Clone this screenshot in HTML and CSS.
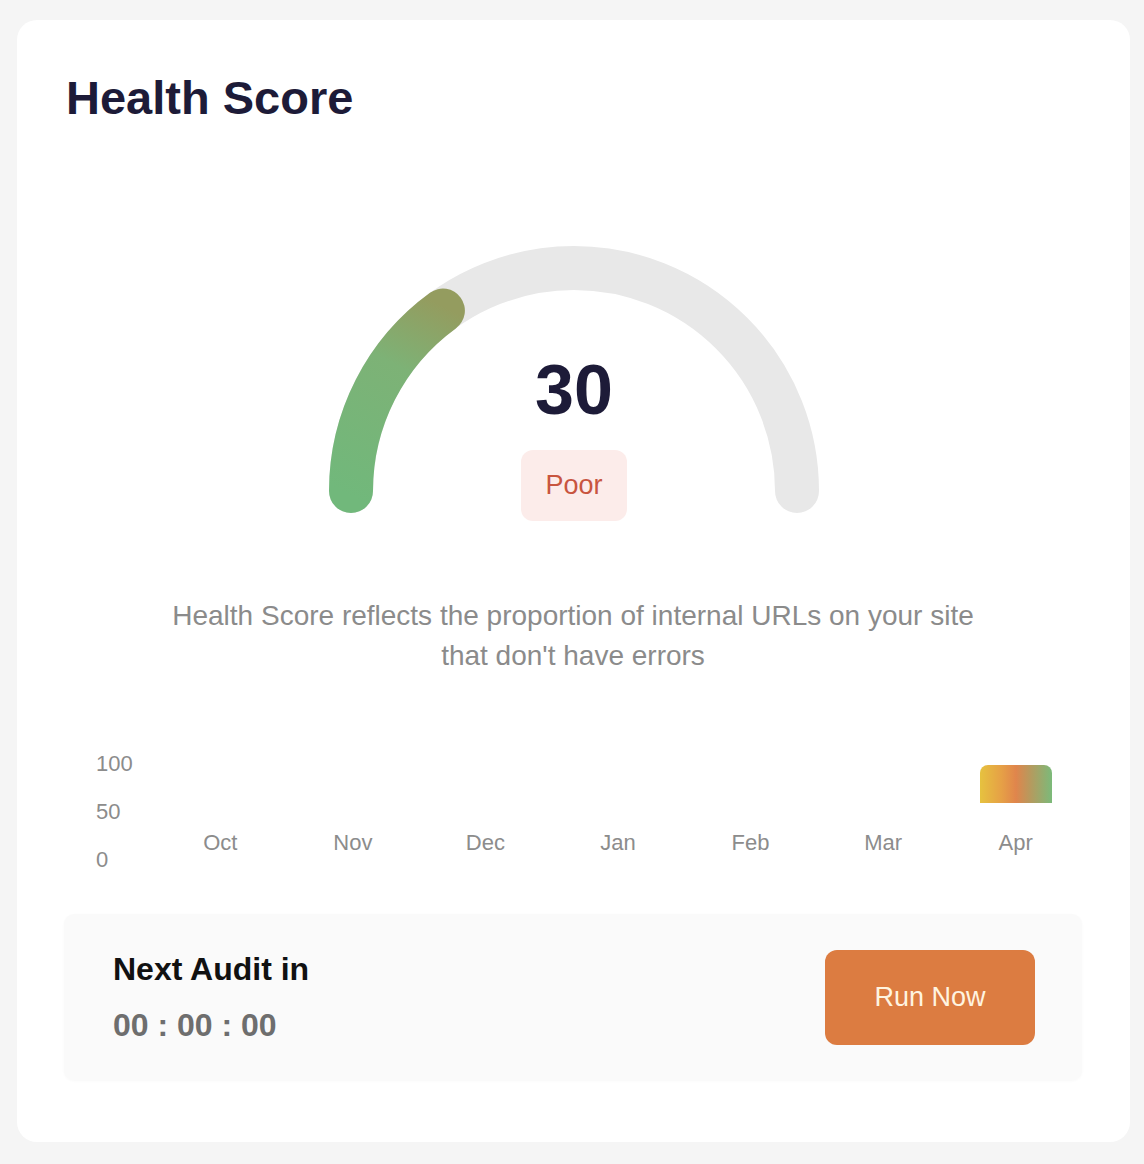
FILE: index.html
```html
<!DOCTYPE html>
<html lang="en">
<head>
    <meta charset="UTF-8">
    <meta name="viewport" content="width=device-width, initial-scale=1.0">
    <title>Health Score</title>
    <link rel="stylesheet" href="styles.css">
</head>
<body>

<div class="card">
    <h1 class="card-title">Health Score</h1>

    <!-- Medidor semicircular -->
    <div class="gauge">
        <svg class="gauge-arc" width="490" height="275" viewBox="0 0 490 275">
            <defs>
                <linearGradient id="scoreGradient" gradientUnits="userSpaceOnUse" x1="22" y1="250" x2="118" y2="62">
                    <stop offset="0" stop-color="#71b87b"/>
                    <stop offset="0.65" stop-color="#7db276"/>
                    <stop offset="1" stop-color="#949c5f"/>
                </linearGradient>
            </defs>
            <path d="M 22 245 A 223 223 0 0 1 468 245" fill="none" stroke="#e8e8e8" stroke-width="44" stroke-linecap="round"/>
            <path d="M 22 245 A 223 223 0 0 1 113.9 64.6" fill="none" stroke="url(#scoreGradient)" stroke-width="44" stroke-linecap="round"/>
        </svg>
        <div class="gauge-center">
            <div class="gauge-value">30</div>
            <div class="badge">Poor</div>
        </div>
    </div>

    <p class="description">Health Score reflects the proportion of internal URLs on your site<br>that don't have errors</p>

    <!-- Histórico mensal -->
    <div class="chart">
        <div class="y-axis">
            <span>100</span>
            <span>50</span>
            <span>0</span>
        </div>
        <div class="plot">
            <div class="month"><div class="bar-area"></div><span>Oct</span></div>
            <div class="month"><div class="bar-area"></div><span>Nov</span></div>
            <div class="month"><div class="bar-area"></div><span>Dec</span></div>
            <div class="month"><div class="bar-area"></div><span>Jan</span></div>
            <div class="month"><div class="bar-area"></div><span>Feb</span></div>
            <div class="month"><div class="bar-area"></div><span>Mar</span></div>
            <div class="month"><div class="bar-area"><div class="bar" style="height: 38px;"></div></div><span>Apr</span></div>
        </div>
    </div>

    <!-- Próxima auditoria -->
    <div class="audit">
        <div class="audit-info">
            <div class="audit-title">Next Audit in</div>
            <div class="audit-timer">00 : 00 : 00</div>
        </div>
        <button class="run-button">Run Now</button>
    </div>
</div>

</body>
</html>
```

FILE: styles.css
```css
body {
    font-family: "Liberation Sans", Arial, Helvetica, sans-serif;
    margin: 0;
    padding: 20px 14px 22px 17px;
    background-color: #f5f5f5;
}
.card {
    background-color: #fff;
    border-radius: 20px;
    padding: 50px 48px 62px 47px;
}
.card-title {
    margin: 0 0 0 2px;
    font-size: 47px;
    line-height: 56px;
    font-weight: bold;
    color: #1d1b38;
}

/* medidor */
.gauge {
    display: grid;
    justify-content: center;
    margin-top: 120px;
    padding-left: 2px;
}
.gauge-arc,
.gauge-center {
    grid-area: 1 / 1;
}
.gauge-arc {
    display: block;
}
.gauge-center {
    display: flex;
    flex-direction: column;
    align-items: center;
    padding-top: 104px;
}
.gauge-value {
    font-size: 70px;
    line-height: 80px;
    font-weight: bold;
    color: #1d1b38;
}
.badge {
    margin-top: 20px;
    padding: 20px 24px;
    font-size: 27px;
    line-height: 31px;
    color: #c8553f;
    background-color: #fcecea;
    border-radius: 12px;
}

.description {
    margin: 75px 0 0;
    text-align: center;
    font-size: 28px;
    line-height: 40px;
    color: #8b8b8b;
}

/* gráfico */
.chart {
    display: flex;
    align-items: flex-start;
    margin-top: 64px;
    padding-left: 32px;
    color: #8c8c8c;
    font-size: 22px;
}
.y-axis {
    display: flex;
    flex-direction: column;
    width: 58px;
    line-height: 48px;
}
.plot {
    flex: 1;
    display: grid;
    grid-template-columns: repeat(7, 1fr);
    margin-top: 13px;
}
.month {
    display: flex;
    flex-direction: column;
    align-items: center;
}
.month span {
    margin-top: 24px;
    line-height: 32px;
}
.bar-area {
    height: 50px;
    display: flex;
    align-items: flex-end;
}
.bar {
    width: 72px;
    border-radius: 8px 8px 0 0;
    background: linear-gradient(to right, #e6c23f 0%, #e6a046 30%, #e0854c 50%, #b69a5e 70%, #7bba7a 100%);
}

/* auditoria */
.audit {
    display: flex;
    justify-content: space-between;
    align-items: center;
    margin-top: 30px;
    padding: 35px 47px 35px 49px;
    background-color: #fafafa;
    border-radius: 10px;
    box-shadow: 0 1px 3px rgba(0,0,0,0.03);
}
.audit-title {
    font-size: 32px;
    line-height: 40px;
    font-weight: bold;
    color: #111;
}
.audit-timer {
    margin-top: 16px;
    font-size: 32px;
    line-height: 40px;
    font-weight: bold;
    color: #6e6e6e;
}
.run-button {
    width: 210px;
    height: 95px;
    border: none;
    border-radius: 12px;
    background-color: #dc7c41;
    color: #fff4e0;
    font-family: inherit;
    font-size: 27px;
    cursor: pointer;
}
```
